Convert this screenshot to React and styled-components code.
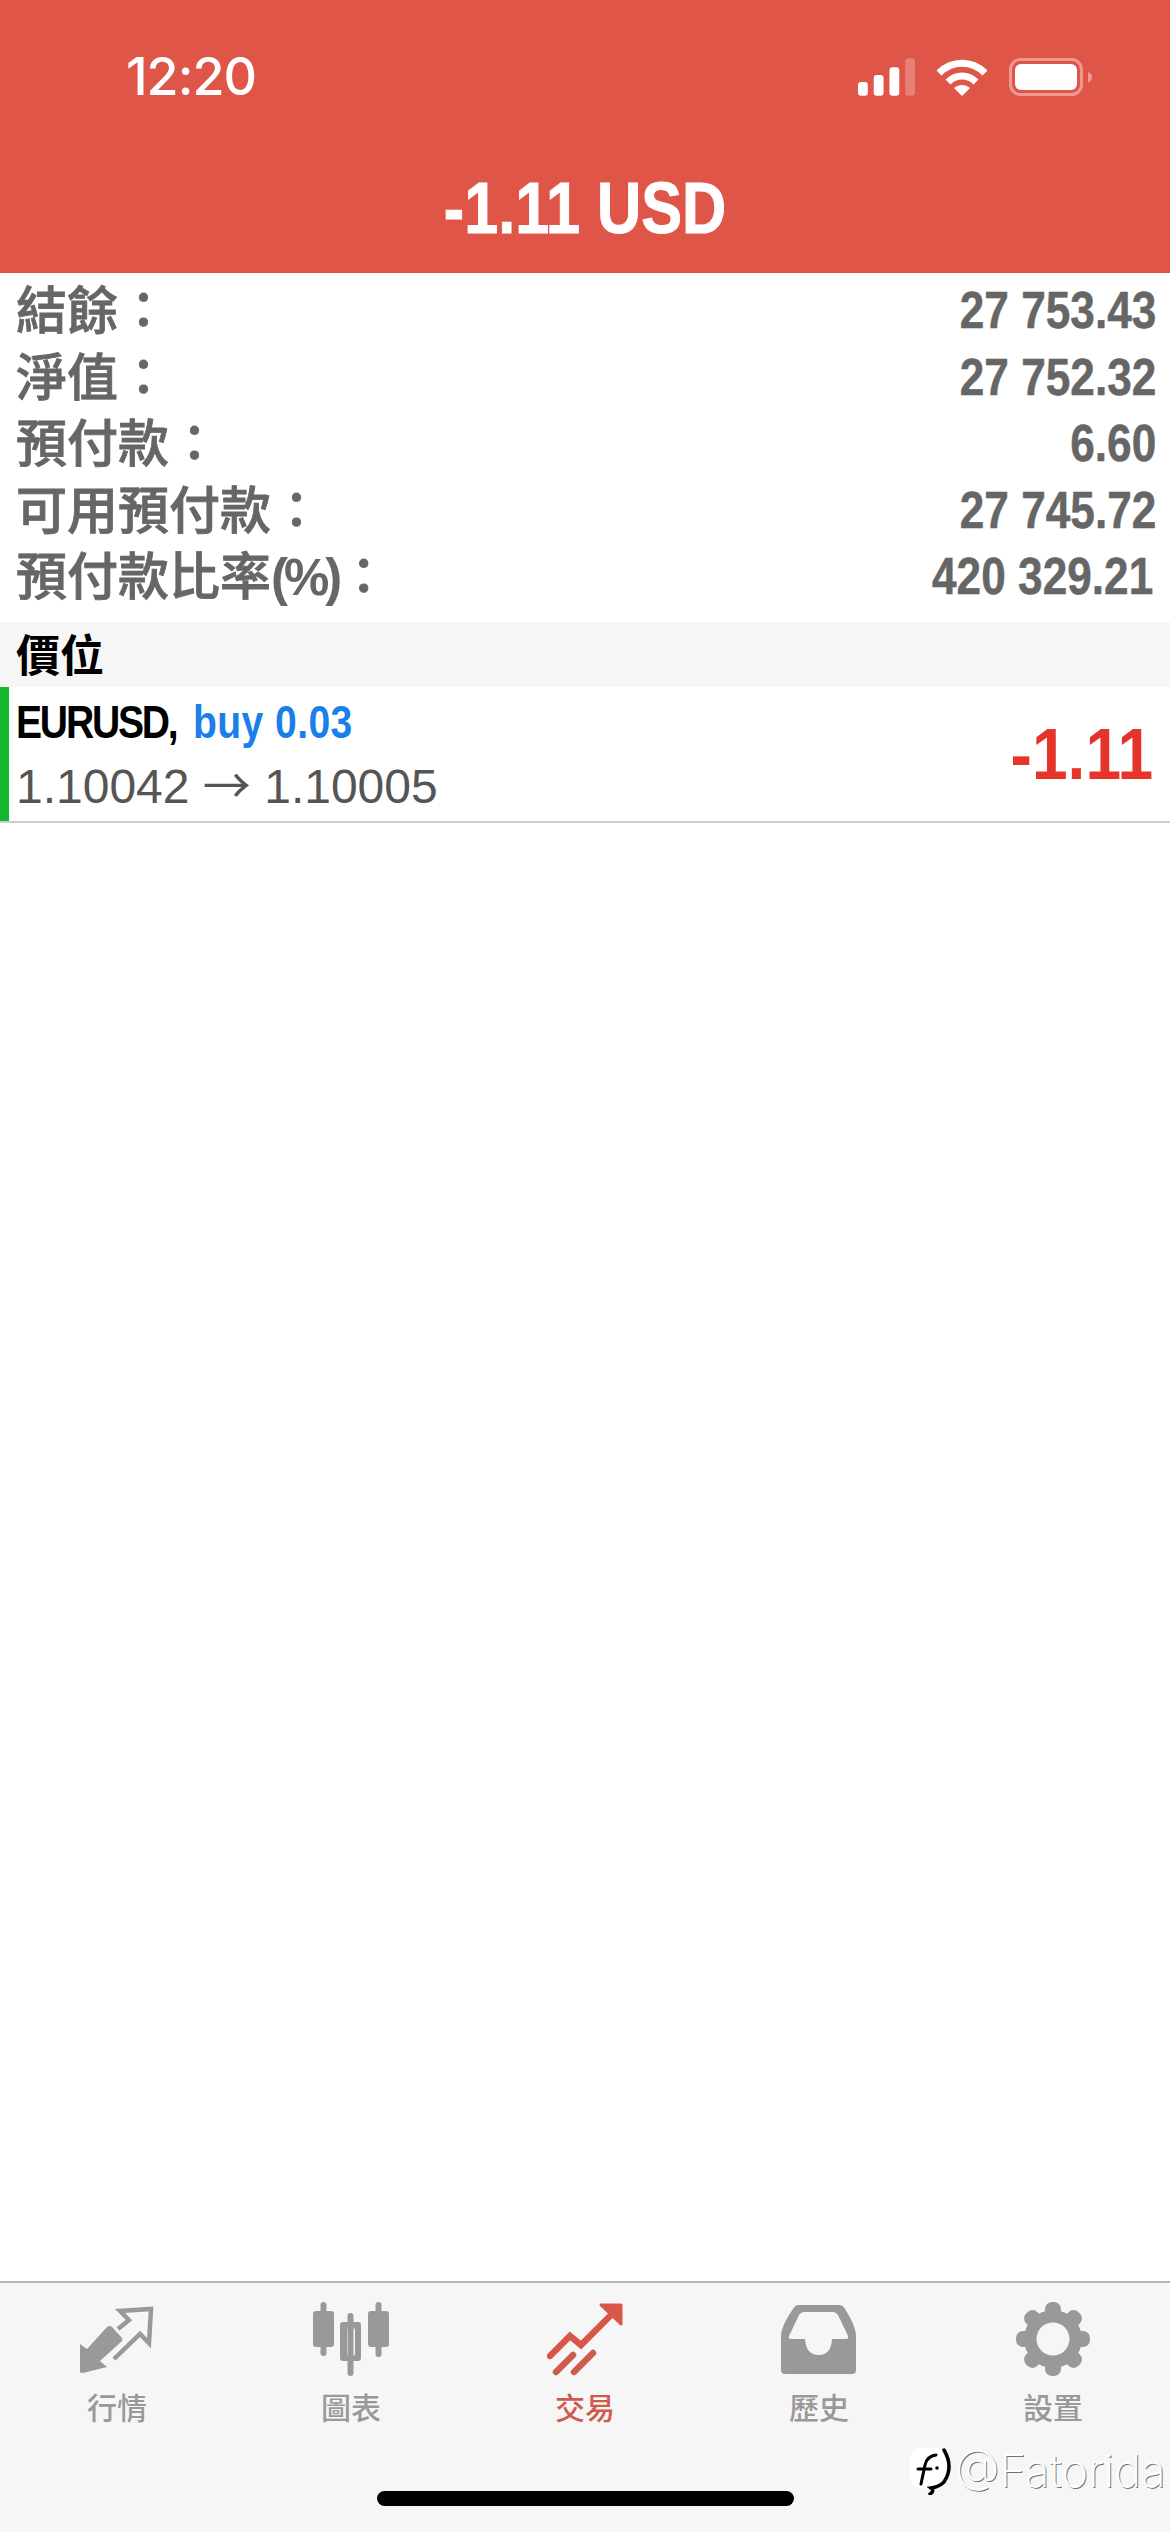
import React from "react";
import styled, { createGlobalStyle } from "styled-components";

const GlobalStyle = createGlobalStyle`
  html, body {
    margin: 0;
    padding: 0;
    background: #fff;
    overflow: hidden;
  }
  * {
    box-sizing: border-box;
  }
`;

const Page = styled.div`
  position: relative;
  width: 1170px;
  height: 2532px;
  display: flex;
  flex-direction: column;
  background: #fff;
  font-family: "Liberation Sans", "Noto Sans CJK TC", sans-serif;
`;

const Header = styled.header`
  height: 273px;
  padding-top: 58px;
  background: #df5648;
  color: #fff;
`;

const StatusRow = styled.div`
  height: 38px;
  padding: 0 78px 0 126px;
  display: flex;
  align-items: center;
  justify-content: space-between;
`;

const Time = styled.span`
  font-family: "Inter", sans-serif;
  font-size: 52px;
  font-weight: 500;
  line-height: 38px;
  letter-spacing: -1px;
`;

const StatusIcons = styled.div`
  display: flex;
  align-items: center;
  gap: 22px;
`;

const Title = styled.h1`
  margin: 82px 0 0;
  text-align: center;
  font-size: 72px;
  line-height: 60px;
  font-weight: 700;
  -webkit-text-stroke: 1px #fff;
  transform: scaleX(0.85);
`;

const Summary = styled.section`
  padding: 4px 0 12px;
`;

const SummaryRow = styled.div`
  height: 66.5px;
  padding: 0 14px 0 16px;
  display: flex;
  align-items: center;
  justify-content: space-between;
  color: #666;
`;

const SummaryLabel = styled.span`
  position: relative;
  top: 2px;
  font-size: 51px;
  font-weight: 500;
  line-height: 60px;
  -webkit-text-stroke: 0.8px #666;
`;

const Percent = styled.span`
  font-weight: 700;
  letter-spacing: -4px;
  -webkit-text-stroke: 0;
`;

const SummaryValue = styled.span`
  display: inline-block;
  font-size: 52px;
  font-weight: 700;
  line-height: 60px;
  -webkit-text-stroke: 0.5px #666;
  transform: scaleX(0.85);
  transform-origin: right center;
  margin-right: ${(p) => (p.$nudge ? "3px" : "0")};
`;

const SectionHeader = styled.div`
  height: 65px;
  padding: 0 16px 2px;
  display: flex;
  align-items: center;
  background: #f6f6f6;
  color: #000;
  font-size: 44px;
  font-weight: 700;
`;

const PositionRow = styled.div`
  height: 136px;
  display: flex;
  border-bottom: 2px solid #ccc;
`;

const SideBar = styled.div`
  width: 9px;
  background: #12b72e;
`;

const PositionBody = styled.div`
  flex: 1;
  padding: 0 17px 0 7px;
  display: flex;
  align-items: center;
  justify-content: space-between;
`;

const PositionInfo = styled.div`
  display: flex;
  flex-direction: column;
  gap: 6px;
  padding-top: 1px;
`;

const PositionTitle = styled.div`
  font-size: 46px;
  font-weight: 700;
  line-height: 54px;
  color: #000;
  letter-spacing: -2.6px;
  transform: scaleX(0.85);
  transform-origin: left center;
  white-space: nowrap;
`;

const BuyText = styled.span`
  margin-left: 6px;
  letter-spacing: 0.5px;
  color: #1a7fe8;
`;

const PriceLine = styled.div`
  font-size: 48px;
  line-height: 54px;
  color: #555;
  white-space: nowrap;
`;

const PriceArrow = styled.span`
  font-family: "Noto Sans CJK TC", sans-serif;
`;

const Profit = styled.div`
  font-size: 72px;
  font-weight: 700;
  color: #e5352a;
  transform: scaleX(0.89);
  transform-origin: right center;
`;

const Spacer = styled.div`
  flex: 1;
`;

const TabBar = styled.nav`
  height: 251px;
  padding-top: 19px;
  display: grid;
  grid-template-columns: repeat(5, 1fr);
  align-items: start;
  border-top: 2px solid #b8b8b8;
  background: #f6f6f6;
`;

const Tab = styled.div`
  display: flex;
  flex-direction: column;
  align-items: center;
  gap: 14px;
  color: ${(p) => (p.$active ? "#cf5a4e" : "#999")};
`;

const TabLabel = styled.span`
  font-size: 30px;
  line-height: 38px;
  font-weight: 500;
`;

const HomeIndicator = styled.div`
  position: absolute;
  left: 377px;
  top: 2491px;
  width: 417px;
  height: 15px;
  border-radius: 8px;
  background: #000;
`;

const Watermark = styled.div`
  position: absolute;
  left: 910px;
  top: 2446px;
  display: flex;
  align-items: center;
  gap: 1px;
`;

const WatermarkText = styled.span`
  font-family: "Inter", sans-serif;
  font-size: 45.5px;
  font-weight: 200;
  line-height: 50px;
  color: #fff;
  text-shadow: 1px 1px 0 rgba(0, 0, 0, 0.55);
`;

const SignalIcon = () => (
  <svg width="57" height="38" viewBox="0 0 58 38" fill="#fff">
    <rect x="0" y="24" width="10" height="14" rx="3" />
    <rect x="16" y="17" width="10" height="21" rx="3" />
    <rect x="32" y="9" width="10" height="29" rx="3" />
    <rect x="48" y="0" width="10" height="38" rx="3" opacity="0.25" />
  </svg>
);

const WifiIcon = () => (
  <svg width="50" height="38" viewBox="0 0 50 38" fill="none" stroke="#fff" strokeWidth="7">
    <path d="M2 15 C15 2 35 2 48 15" />
    <path d="M11 24 C19 16 31 16 39 24" />
    <path d="M17 30 L25 38 L33 30 C28 26 22 26 17 30 Z" fill="#fff" stroke="none" />
  </svg>
);

const BatteryIcon = () => (
  <svg width="83" height="38" viewBox="0 0 83 38" fill="none">
    <rect x="1.5" y="1.5" width="71" height="35" rx="10" stroke="#fff" strokeOpacity="0.4" strokeWidth="3" />
    <rect x="6" y="6" width="62" height="26" rx="6" fill="#fff" />
    <path d="M79 14 C82 15 83 17 83 19 C83 21 82 23 79 25 Z" fill="#fff" fillOpacity="0.4" />
  </svg>
);

const QuotesIcon = () => (
  <svg width="76" height="74" viewBox="0 0 76 74" fill="currentColor">
    <path d="M1 70 L1 42 L8 47 L28 25 Q31 23 33 25 L43 36 Q44 38 43 39 L21 59 L28 65 L4 71 Q1 71 1 70 Z" />
    <path
      d="M39 27 L50 18 L41 9 L72 7 L70 41 L61 32 L35 57"
      fill="none"
      stroke="currentColor"
      strokeWidth="4.5"
    />
  </svg>
);

const ChartsIcon = () => (
  <svg width="76" height="74" viewBox="0 0 76 74" fill="currentColor">
    <rect x="7.5" y="0" width="6" height="54" rx="3" />
    <rect x="0" y="9" width="21" height="36" rx="3" />
    <rect x="34.5" y="11" width="6" height="63" rx="3" />
    <path
      fillRule="evenodd"
      d="M30 20 H45 Q48 20 48 23 V56 Q48 59 45 59 H30 Q27 59 27 56 V23 Q27 20 30 20 Z M36 26 Q34 26 34 28 V52 Q34 54 36 54 H40 Q42 54 42 52 V28 Q42 26 40 26 Z"
    />
    <rect x="62.5" y="0" width="6" height="55" rx="3" />
    <rect x="55" y="9" width="21" height="36" rx="3" />
  </svg>
);

const TradeIcon = () => (
  <svg width="76" height="74" viewBox="0 0 76 74" fill="none" stroke="currentColor" strokeWidth="6.5" strokeLinecap="round">
    <path d="M3 54 L23 34 L34 43 L68 9" strokeLinejoin="miter" stroke="#d9564a" />
    <path d="M54 3 H74 V22 Z" fill="#d9564a" stroke="#d9564a" strokeWidth="3" strokeLinejoin="round" />
    <path d="M9 70 L26 53" />
    <path d="M27 70 L46 51" />
  </svg>
);

const HistoryIcon = () => (
  <svg width="76" height="74" viewBox="0 0 76 74" fill="currentColor">
    <path
      fillRule="evenodd"
      d="M18 3 H58 Q62 3 64 7 Q75 24 75 34 V68 Q75 72 71 72 H4 Q0 72 0 68 V34 Q0 24 12 7 Q14 3 18 3 Z M23 10 Q20 10 18 13 L8 34 Q7 37 10 37 H24 Q25 53 38 53 Q50 53 51 37 H65 Q68 37 67 34 L57 13 Q55 10 52 10 Z"
    />
  </svg>
);

const SettingsIcon = () => (
  <svg width="76" height="74" viewBox="0 0 76 74">
    <g fill="currentColor">
      <circle cx="38" cy="37" r="29" />
      {[0, 45, 90, 135, 180, 225, 270, 315].map((angle) => (
        <rect key={angle} x="30" y="0" width="16" height="20" rx="7" transform={`rotate(${angle} 38 37)`} />
      ))}
    </g>
    <circle cx="38" cy="37" r="16.5" fill="#f6f6f6" />
  </svg>
);

const WatermarkLogo = () => (
  <svg width="44" height="48" viewBox="0 0 44 48" fill="none">
    <rect x="0" y="1" width="38" height="40" rx="11" fill="#fff" />
    <path d="M26 8 Q17 9 15 18 L11 37" stroke="#000" strokeWidth="3" strokeLinecap="round" />
    <path d="M8 22 H21" stroke="#000" strokeWidth="3" strokeLinecap="round" />
    <circle cx="27" cy="21" r="1.8" fill="#000" />
    <path d="M34 3 Q44 20 34 35 Q29 40 21 41 Q25 44 20 47" stroke="#000" strokeWidth="3.5" strokeLinecap="round" />
  </svg>
);

const summaryRows = [
  { id: "balance", label: "結餘：", value: "27 753.43" },
  { id: "equity", label: "淨值：", value: "27 752.32" },
  { id: "margin", label: "預付款：", value: "6.60" },
  { id: "free", label: "可用預付款：", value: "27 745.72" },
  {
    id: "level",
    label: (
      <>
        預付款比率<Percent>(%)</Percent>：
      </>
    ),
    value: "420 329.21",
    nudge: true,
  },
];

const tabs = [
  { label: "行情", icon: <QuotesIcon /> },
  { label: "圖表", icon: <ChartsIcon /> },
  { label: "交易", icon: <TradeIcon />, active: true },
  { label: "歷史", icon: <HistoryIcon /> },
  { label: "設置", icon: <SettingsIcon /> },
];

export default function App() {
  return (
    <Page>
      <GlobalStyle />
      <Header>
        <StatusRow>
          <Time>12:20</Time>
          <StatusIcons>
            <SignalIcon />
            <WifiIcon />
            <BatteryIcon />
          </StatusIcons>
        </StatusRow>
        <Title>-1.11 USD</Title>
      </Header>

      <Summary>
        {summaryRows.map((row) => (
          <SummaryRow key={row.id}>
            <SummaryLabel>{row.label}</SummaryLabel>
            <SummaryValue $nudge={row.nudge}>{row.value}</SummaryValue>
          </SummaryRow>
        ))}
      </Summary>

      <SectionHeader>價位</SectionHeader>

      <PositionRow>
        <SideBar />
        <PositionBody>
          <PositionInfo>
            <PositionTitle>
              EURUSD,<BuyText> buy 0.03</BuyText>
            </PositionTitle>
            <PriceLine>
              1.10042 <PriceArrow>→</PriceArrow> 1.10005
            </PriceLine>
          </PositionInfo>
          <Profit>-1.11</Profit>
        </PositionBody>
      </PositionRow>

      <Spacer />

      <TabBar>
        {tabs.map((tab) => (
          <Tab key={tab.label} $active={tab.active}>
            {tab.icon}
            <TabLabel>{tab.label}</TabLabel>
          </Tab>
        ))}
      </TabBar>

      <HomeIndicator />
      <Watermark>
        <WatermarkLogo />
        <WatermarkText>@Fatorida</WatermarkText>
      </Watermark>
    </Page>
  );
}
